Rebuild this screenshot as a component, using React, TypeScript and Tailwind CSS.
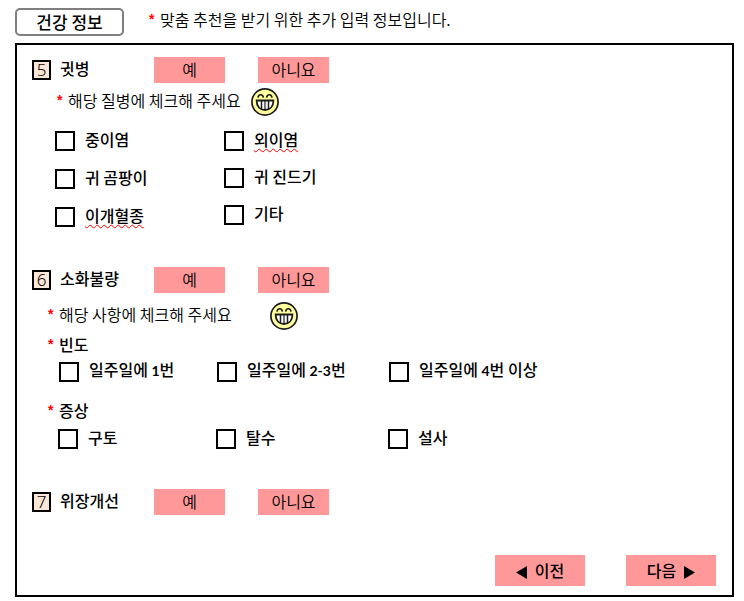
import type { ReactNode } from "react";

function Smiley() {
  return (
    <svg width="28" height="28" viewBox="0 0 28 28" role="img" aria-label="웃는 얼굴" className="shrink-0">
      <circle cx="14" cy="14" r="13.1" fill="#ffff9f" stroke="#1c1c1c" strokeWidth="1.7" />
      <path d="M7 9.6C7.4 5.8 12 5.8 12.4 9.6M15.6 9.6C16 5.8 20.6 5.8 21 9.6" fill="none" stroke="#1c1c1c" strokeWidth="1.6" />
      <path d="M5.6 12.5H22.4C22.4 18.5 19 22 14 22S5.6 18.5 5.6 12.5Z" fill="#fff" stroke="#1c1c1c" strokeWidth="1.8" />
      <path d="M10.5 13V21M17.5 13V21" stroke="#1c1c1c" strokeWidth="1.5" />
      <path d="M14 13V22" stroke="#1c1c1c" strokeWidth="1.2" />
    </svg>
  );
}

function Star() {
  return <span className="w-[11px] shrink-0 font-['Liberation_Sans'] text-sm leading-5 font-bold text-[#ff0000]">*</span>;
}

function Question({ no, title }: { no: number; title: string }) {
  return (
    <div className="grid grid-cols-[28px_94px_104px_71px] items-center pl-[15px]">
      <span className="flex h-5 w-[19px] items-center justify-center border-2 border-black bg-[#fde6d8] font-['Noto_Sans'] text-[17px] leading-4 font-light">
        {no}
      </span>
      <h2 className="pb-1 font-medium">{title}</h2>
      <button type="button" className="h-[26px] w-[71px] bg-[#ff9999] pb-0.5 font-[350]">예</button>
      <button type="button" className="h-[26px] w-[71px] bg-[#ff9999] pb-0.5 font-[350]">아니요</button>
    </div>
  );
}

function Check({ children }: { children: ReactNode }) {
  return (
    <label className="flex h-5 items-center gap-[10px] font-medium whitespace-nowrap">
      <input type="checkbox" className="size-5 shrink-0 appearance-none border-2 border-black bg-white checked:bg-black" />
      <span className="pb-1">{children}</span>
    </label>
  );
}

function Misspelt({ children }: { children: ReactNode }) {
  return <span className="pr-1 underline decoration-[#ff0000] decoration-wavy decoration-1 underline-offset-2">{children}</span>;
}

function Num({ children }: { children: ReactNode }) {
  return <span className="font-['Lato'] text-sm leading-5 font-bold">{children}</span>;
}

export default function App() {
  return (
    <main className="bg-white pt-2 pr-[10px] pb-1 pl-[15px] font-['Noto_Sans_CJK_KR',sans-serif] text-base leading-5 text-black">
      <header className="flex items-center gap-[25px]">
        <h1 className="flex h-7 w-[109px] items-center justify-center rounded-[5px] border-2 border-[#7f7f7f] text-[17px] font-medium">
          건강 정보
        </h1>
        <p className="flex h-[26px] items-start font-[350]">
          <Star />
          맞춤 추천을 받기 위한 추가 입력 정보입니다.
        </p>
      </header>

      <form className="mt-[7px] border-2 border-black pt-3 pb-[9px]">
        <section>
          <Question no={5} title="귓병" />
          <div className="mt-[5px] flex items-center pl-10">
            <p className="flex w-[194px] pb-1 font-[350] whitespace-nowrap"><Star />해당 질병에 체크해 주세요</p>
            <Smiley />
          </div>
          <div className="mt-[15px] grid grid-cols-[169px_auto] justify-start pl-[38px]">
            <div className="flex flex-col gap-[18px]">
              <Check>중이염</Check>
              <Check>귀 곰팡이</Check>
              <Check><Misspelt>이개혈종</Misspelt></Check>
            </div>
            <div className="flex flex-col gap-[17px]">
              <Check><Misspelt>외이염</Misspelt></Check>
              <Check>귀 진드기</Check>
              <Check>기타</Check>
            </div>
          </div>
        </section>

        <section className="mt-10">
          <Question no={6} title="소화불량" />
          <div className="mt-[9px] flex items-center pl-[31px]">
            <p className="flex w-[222px] pb-1 font-[350] whitespace-nowrap"><Star />해당 사항에 체크해 주세요</p>
            <Smiley />
          </div>
          <h3 className="mt-1 flex pl-[31px] font-medium"><Star />빈도</h3>
          <div className="mt-2 grid grid-cols-[158px_172px_auto] justify-start pl-[42px]">
            <Check>일주일에 <Num>1</Num>번</Check>
            <Check>일주일에 <Num>2-3</Num>번</Check>
            <Check>일주일에 <Num>4</Num>번 이상</Check>
          </div>
          <h3 className="mt-[18px] flex pl-[31px] font-medium"><Star />증상</h3>
          <div className="mt-[9px] grid grid-cols-[158px_172px_auto] justify-start pl-[41px]">
            <Check>구토</Check>
            <Check>탈수</Check>
            <Check>설사</Check>
          </div>
        </section>

        <section className="mt-10">
          <Question no={7} title="위장개선" />
        </section>

        <nav className="mt-10 flex justify-end gap-[41px] pr-4">
          <button type="button" className="flex h-[31px] w-[90px] items-center justify-center gap-2 bg-[#ff9999] font-medium">
            <svg width="11" height="13" viewBox="0 0 11 13" aria-hidden="true" className="mt-1"><path d="M11 0V13L0 6.5Z" /></svg>
            <span className="pb-0.5">이전</span>
          </button>
          <button type="button" className="flex h-[31px] w-[90px] items-center justify-center gap-2 bg-[#ff9999] font-medium">
            <span className="pb-0.5">다음</span>
            <svg width="11" height="13" viewBox="0 0 11 13" aria-hidden="true" className="mt-1"><path d="M0 0V13L11 6.5Z" /></svg>
          </button>
        </nav>
      </form>
    </main>
  );
}
